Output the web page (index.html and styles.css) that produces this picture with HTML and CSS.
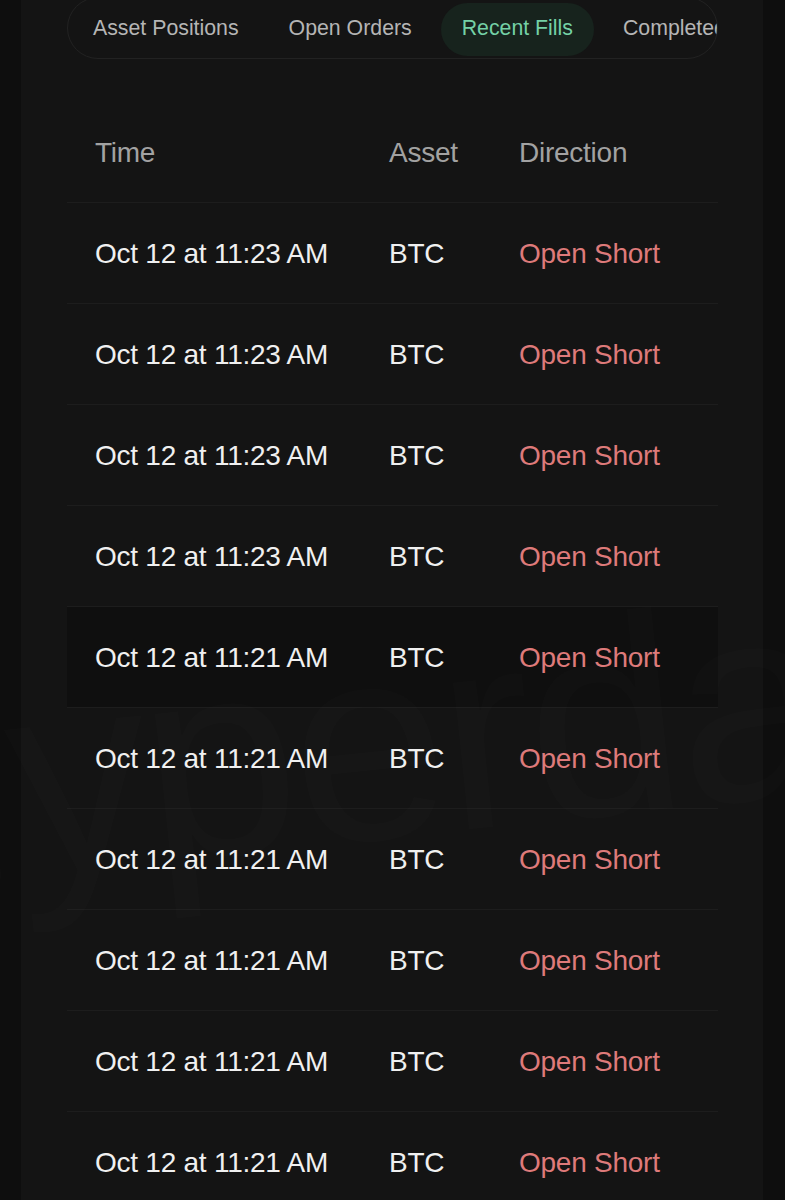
FILE: index.html
```html
<!DOCTYPE html>
<html lang="en">
<head>
    <meta charset="UTF-8" />
    <meta name="viewport" content="width=device-width, initial-scale=1" />
    <title>Recent Fills</title>
    <link rel="stylesheet" href="styles.css">
</head>
<body>
    <div class="panel">
        <nav class="tabs">
            <span class="tab">Asset Positions</span>
            <span class="tab">Open Orders</span>
            <span class="tab active">Recent Fills</span>
            <span class="tab">Completed Trades</span>
        </nav>

        <div class="table-wrap">
            <table class="fills">
                <thead>
                    <tr>
                        <th class="col-time">Time</th>
                        <th class="col-asset">Asset</th>
                        <th>Direction</th>
                    </tr>
                </thead>
                <tbody>
                    <tr><td>Oct 12 at 11:23 AM</td><td>BTC</td><td class="short">Open Short</td></tr>
                    <tr><td>Oct 12 at 11:23 AM</td><td>BTC</td><td class="short">Open Short</td></tr>
                    <tr><td>Oct 12 at 11:23 AM</td><td>BTC</td><td class="short">Open Short</td></tr>
                    <tr><td>Oct 12 at 11:23 AM</td><td>BTC</td><td class="short">Open Short</td></tr>
                    <tr class="hover"><td>Oct 12 at 11:21 AM</td><td>BTC</td><td class="short">Open Short</td></tr>
                    <tr><td>Oct 12 at 11:21 AM</td><td>BTC</td><td class="short">Open Short</td></tr>
                    <tr><td>Oct 12 at 11:21 AM</td><td>BTC</td><td class="short">Open Short</td></tr>
                    <tr><td>Oct 12 at 11:21 AM</td><td>BTC</td><td class="short">Open Short</td></tr>
                    <tr><td>Oct 12 at 11:21 AM</td><td>BTC</td><td class="short">Open Short</td></tr>
                    <tr><td>Oct 12 at 11:21 AM</td><td>BTC</td><td class="short">Open Short</td></tr>
                </tbody>
            </table>
        </div>
    </div>

    <div class="watermark" aria-hidden="true">Hyperdash</div>
</body>
</html>
```

FILE: styles.css
```css
body {
    margin: 0;
    height: 1200px;
    overflow: hidden;
    background-color: #0e0e0e;
    font-family: "Liberation Sans", Arial, sans-serif;
    position: relative;
}
.panel {
    margin-left: 21px;
    width: 742px;
    min-height: 1200px;
    box-sizing: border-box;
    padding: 0 45px 0 46px;
    background-color: #141414;
}
.tabs {
    margin-top: -3px;
    display: flex;
    gap: 8px;
    padding: 5px 4px 2px;
    border: 1px solid #222;
    border-radius: 31px;
    overflow: hidden;
    white-space: nowrap;
}
.tab {
    flex: none;
    height: 53px;
    line-height: 50px;
    padding: 0 21px;
    border-radius: 27px;
    font-size: 21.3px;
    color: #b5b5b5;
}
.tab.active {
    background-color: #17231d;
    color: #74d1a6;
}
.table-wrap {
    margin-top: 43px;
    overflow: hidden;
}
.fills {
    width: 100%;
    border-collapse: collapse;
    font-size: 28px;
    letter-spacing: -0.25px;
}
.fills th,
.fills td {
    height: 98px;
    padding: 2px 0 0;
    text-align: left;
    vertical-align: middle;
    border-bottom: 1px solid #1d1d1d;
    white-space: nowrap;
}
.fills th {
    font-weight: normal;
    color: #a2a2a2;
}
.fills td {
    color: #f0f0f0;
}
.fills .col-time {
    width: 294px;
    padding-left: 28px;
}
.fills td:first-child {
    padding-left: 28px;
}
.fills .col-asset {
    width: 130px;
}
.fills tr.hover td {
    background-color: #0f0f0f;
}
.fills td.short {
    color: #de7a7a;
}
.watermark {
    position: absolute;
    left: -170px;
    top: 640px;
    font-size: 280px;
    letter-spacing: -6px;
    color: rgba(255, 255, 255, 0.011);
    transform: rotate(-6deg);
    transform-origin: left bottom;
    pointer-events: none;
    white-space: nowrap;
}
```
